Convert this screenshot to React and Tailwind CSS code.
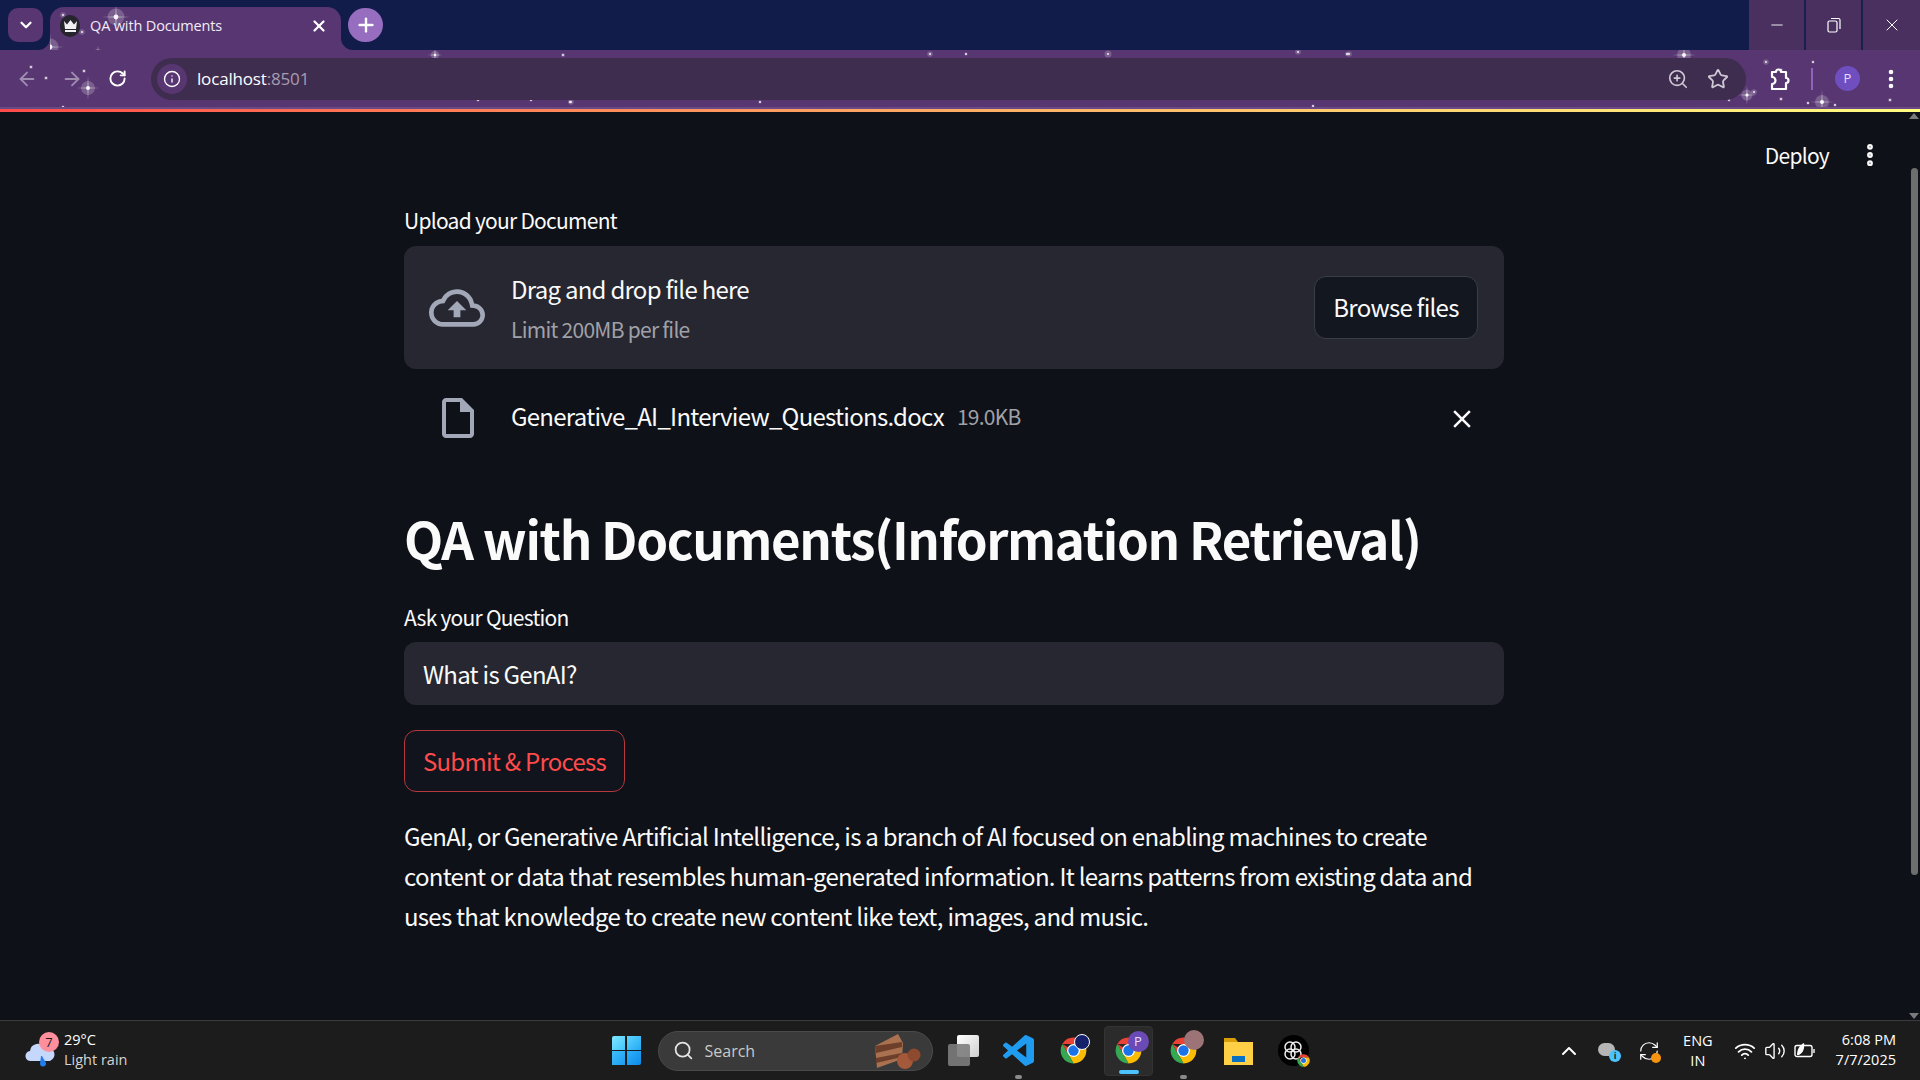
import {
  ArrowLeft, ArrowRight, RotateCw, Info, ZoomIn, Star, EllipsisVertical, X, Plus,
  ChevronDown, ChevronUp, Minus, Search, Wifi, Volume2, RefreshCw,
} from "lucide-react";
import { MdOutlineCloudUpload, MdOutlineInsertDriveFile, MdClose } from "react-icons/md";

const st = '"Noto Sans CJK SC", "Noto Sans", sans-serif';
const sysFont = "font-['Open_Sans','Noto_Sans',sans-serif]";

const tabStars = [
  [66, 10, 6], [0, 40, 6], [48, 46, 3], [11, 50, 2], [32, 25, 2], [13, 8, 2],
];

const barStars = [
  [31, 17, 1.5], [46, 28, 1.5], [84, 21, 1.5], [88, 38, 5], [63, 57, 1.2], [435, 5, 3], [563, 5, 1.5],
  [478, 50, 1.2], [531, 50, 1.2], [571, 52, 2], [930, 4, 2], [966, 4, 1.2], [1108, 4, 2.5], [1347, 4, 1.5],
  [1298, 2, 2], [1349, 4, 2], [1684, 5, 5], [1766, 12, 2], [1813, 12, 1.2], [1781, 20, 1.5],
  [1747, 45, 4], [1754, 42, 2], [1781, 49, 1.5], [1822, 52, 5], [1808, 53, 1.2], [1890, 50, 1.5],
  [1729, 50, 1.2], [1313, 56, 1.2], [570, 52, 1.2], [760, 52, 1.2], [1835, 55, 1.2],
];

// little sparkles of the browser theme
function Sparkles({ stars, className }) {
  return (
    <svg className={className} width="100%" height="100%">
      {stars.map(([x, y, r], i) => (
        <g key={i} fill="#fff">
          <circle cx={x} cy={y} r={r * 1.4} opacity="0.2" />
          <circle cx={x} cy={y} r={Math.max(1, r * 0.4)} opacity="0.9" />
          {r > 2.5 && (
            <>
              <path d={`M${x - r * 2.4} ${y}L${x} ${y - 0.6}L${x + r * 2.4} ${y}L${x} ${y + 0.6}z`} opacity="0.6" />
              <path d={`M${x} ${y - r * 2.4}L${x + 0.6} ${y}L${x} ${y + r * 2.4}L${x - 0.6} ${y}z`} opacity="0.6" />
            </>
          )}
        </g>
      ))}
    </svg>
  );
}

function ChromeLogo({ size = 31 }) {
  return (
    <svg width={size} height={size} viewBox="0 0 48 48">
      <path d="M24 4A20 20 0 0 1 41.32 14L24 14 6.68 14A20 20 0 0 1 24 4z" fill="#ea4335" />
      <path d="M41.32 14A20 20 0 0 1 24 44L15.34 29 24 14z" fill="#fbbc04" />
      <path d="M6.68 14L15.34 29 24 24z" fill="#ea4335" />
      <path d="M6.68 14L15.34 29 24 44A20 20 0 0 1 6.68 14z" fill="#34a853" />
      <circle cx="24" cy="24" r="10" fill="#fff" />
      <circle cx="24" cy="24" r="8" fill="#1a73e8" />
    </svg>
  );
}

function WindowsLogo() {
  return (
    <div className="grid grid-cols-2 gap-[1.5px] w-[29px] h-[29px]">
      <div className="bg-gradient-to-br from-[#7ee8ff] to-[#3fc4fa] rounded-tl-[2px]" />
      <div className="bg-gradient-to-br from-[#5bd4fd] to-[#20a9f5]" />
      <div className="bg-gradient-to-br from-[#3fc0fb] to-[#1a9cf0]" />
      <div className="bg-gradient-to-br from-[#2bb1fa] to-[#0f8ae8] rounded-br-[2px]" />
    </div>
  );
}

function Main() {
  return (
    <main className="flex-1 min-w-0 relative tracking-[-0.046em]" style={{ fontFamily: st }}>
      <div className="absolute right-[24px] top-[29px] flex items-center gap-[27px] text-[#fafafa]">
        <span className="text-[21px] leading-[28px]">Deploy</span>
        <EllipsisVertical size={28} strokeWidth={3} />
      </div>

      <div className="w-[1100px] mx-auto pt-[92px] text-[#fafafa]">
        <p className="text-[21px] leading-[32px]">Upload your Document</p>

        <div className="mt-[10px] h-[123px] bg-[#262730] rounded-[12px] flex items-center pl-[25px] pr-[26px]">
          <MdOutlineCloudUpload size={56} className="text-[#a3a8b8] mr-[26px] shrink-0" />
          <div className="flex-1">
            <p className="text-[24px] leading-[36px] mt-[1px]">Drag and drop file here</p>
            <p className="text-[21px] leading-[32px] mt-[6px] text-[#a0a1a8]">Limit 200MB per file</p>
          </div>
          <button className="w-[164px] h-[63px] -mt-[1px] rounded-[12px] bg-[#13171f] border-[1.5px] border-[#3a3d46] text-[24px]">
            Browse files
          </button>
        </div>

        <div className="h-[64px] mt-[18px] flex items-center">
          <MdOutlineInsertDriveFile size={48} className="text-[#a3a8b8] ml-[30px] mr-[33px] shrink-0 -mt-[2px]" />
          <span className="text-[24px] leading-[36px] -ml-[4px] -mt-[6px]">Generative_AI_Interview_Questions.docx</span>
          <span className="text-[21px] ml-[13px] text-[#a0a1a8] -mt-[5px]">19.0KB</span>
          <MdClose size={30} className="ml-auto mr-[27px]" />
        </div>

        <h1 className="text-[51px] leading-[80px] font-bold tracking-[-0.027em] mt-[47px]">QA with Documents(Information Retrieval)</h1>

        <p className="text-[21px] leading-[32px] mt-[23px]">Ask your Question</p>
        <div className="mt-[9px] h-[63px] bg-[#262730] rounded-[12px] flex items-center px-[19px] text-[24px]">What is GenAI?</div>

        <button className="mt-[25px] h-[62px] w-[221px] rounded-[12px] border-[1.5px] border-[#b5383c] bg-[#11141c] text-[#ff4b4b] text-[24px]">
          Submit &amp; Process
        </button>

        <p className="mt-[24px] text-[24px] leading-[40px]">
          GenAI, or Generative Artificial Intelligence, is a branch of AI focused on enabling machines to create content or data that resembles human-generated information. It learns patterns from existing data and uses that knowledge to create new content like text, images, and music.
        </p>
      </div>
    </main>
  );
}

function Taskbar() {
  return (
    <footer className={`h-[60px] bg-[#1c1c1c] border-t border-[#3b3b3b] grid grid-cols-[1fr_auto_1fr] items-center ${sysFont} text-white`}>
      <div className="flex items-center pl-[25px] gap-[9px]">
        <div className="relative w-[30px] h-[36px]">
          <svg width="30" height="36" viewBox="0 0 30 36" className="absolute inset-0">
            <path d="M6 28a5 5 0 0 1-1-10 8 8 0 0 1 15-3 6 6 0 0 1 5 13z" fill="#c5d8fb" />
            <path d="M16 23l1 0 4 7a3 3 0 0 1-6 1z" fill="#1f7ff0" />
          </svg>
          <span className="absolute -right-[4px] -top-[1px] w-[20px] h-[20px] rounded-full bg-[#ff8f9c] text-[#1c1c1c] text-[13px] leading-[20px] text-center">7</span>
        </div>
        <div className="text-[14.5px] leading-[20px] -mt-[1px]">
          <p>29°C</p>
          <p className="text-[#d4d4d4]">Light rain</p>
        </div>
      </div>

      <div className="flex items-center">
        <WindowsLogo />
        <div className="ml-[17px] w-[275px] h-[40px] rounded-full bg-[#3a3a3a] border border-[#4a4a4a] flex items-center pl-[14px] pr-[11px]">
          <Search size={21} className="text-[#e5e5e5]" />
          <span className="ml-[11px] text-[16px] text-[#c9c9c9]">Search</span>
          <svg width="48" height="38" viewBox="0 0 48 38" className="ml-auto">
            <path d="M2 14L25 2l5 9-1 16-25 9z" fill="#a9714f" />
            <path d="M2 14l27-4v5L3 21zM3 26l26-5v4L3 31z" fill="#6d3f2a" />
            <circle cx="32" cy="29" r="8" fill="#a3593a" />
            <circle cx="41" cy="23" r="6.5" fill="#8d4a2f" />
          </svg>
        </div>
        <div className="relative ml-[15px] w-[31px] h-[31px]">
          <div className="absolute right-0 top-0 w-[22px] h-[22px] rounded-[2px] bg-gradient-to-br from-white to-[#cfcfcf]" />
          <div className="absolute left-0 bottom-0 w-[22px] h-[22px] rounded-[2px] bg-[#7d7d7d]/90" />
        </div>
        <div className="relative ml-[24px] w-[31px] h-[31px]">
          <svg width="31" height="31" viewBox="0 0 24 24">
            <path fill="#1f9cf0" d="M23.15 2.587L18.21.21a1.494 1.494 0 0 0-1.705.29l-9.46 8.63-4.12-3.128a.999.999 0 0 0-1.276.057L.327 7.261A1 1 0 0 0 .326 8.74L3.899 12 .326 15.26a1 1 0 0 0 .001 1.479L1.65 17.94a.999.999 0 0 0 1.276.057l4.12-3.128 9.46 8.63a1.492 1.492 0 0 0 1.704.29l4.942-2.377A1.5 1.5 0 0 0 24 20.06V3.939a1.5 1.5 0 0 0-.85-1.352zm-5.146 14.861L10.826 12l7.178-5.448v10.896z" />
          </svg>
          <span className="absolute left-[12px] top-[40px] w-[7px] h-[4px] rounded-full bg-[#8a8a8a]" />
        </div>
        <div className="relative ml-[24px]">
          <ChromeLogo />
          <span className="absolute -right-[1px] -top-[1px] w-[16px] h-[16px] rounded-full bg-[#14216a] border border-white" />
        </div>
        <div className="relative ml-[15px] w-[49px] h-[50px] rounded-[4px] bg-[#2b2b2b] border border-[#333] flex items-center justify-center">
          <ChromeLogo />
          <span className="absolute right-[3px] top-[4px] w-[21px] h-[21px] rounded-full bg-[#6a4bb5] text-[#e6dcff] text-[13px] leading-[21px] text-center">P</span>
          <span className="absolute left-[14px] bottom-[1px] w-[20px] h-[4px] rounded-full bg-[#4cc2ff]" />
        </div>
        <div className="relative ml-[15px]">
          <ChromeLogo />
          <span className="absolute -right-[5px] -top-[5px] w-[20px] h-[20px] rounded-full bg-[#9c7478]" />
          <span className="absolute left-[12px] top-[40px] w-[7px] h-[4px] rounded-full bg-[#8a8a8a]" />
        </div>
        <svg width="31" height="31" viewBox="0 0 31 31" className="ml-[24px]">
          <path d="M1 3h11l3 4h-14z" fill="#d99f0a" />
          <path d="M1 7h29v23h-29z" fill="#ffcf46" />
          <path d="M9 21h13v6h-13z" fill="#0a70c4" />
        </svg>
        <div className="relative ml-[24px] w-[31px] h-[31px] rounded-full bg-black flex items-center justify-center">
          <svg width="24" height="24" viewBox="0 0 24 24" fill="none" stroke="#eee" strokeWidth="1.5">
            <circle cx="9" cy="8" r="5" />
            <circle cx="15" cy="8" r="5" />
            <circle cx="9" cy="15" r="5" />
            <circle cx="15" cy="15" r="5" />
          </svg>
          <span className="absolute -right-[2px] -bottom-[2px]"><ChromeLogo size={15} /></span>
        </div>
      </div>

      <div className="flex items-center justify-end pr-[24px]">
        <ChevronUp size={24} strokeWidth={2} className="mr-[17px]" />
        <div className="relative w-[20px] h-[16px] mr-[20px]">
          <div className="absolute left-0 top-0 w-[17px] h-[13px] rounded-full bg-[#b5b5b5]" />
          <span className="absolute -right-[3px] -bottom-[3px] w-[12px] h-[12px] rounded-full bg-[#4cc2ff] text-[#1c1c1c] text-[9px] leading-[12px] text-center font-bold">i</span>
        </div>
        <div className="relative mr-[23px]">
          <RefreshCw size={22} strokeWidth={1.3} />
          <span className="absolute -right-[1px] -bottom-[1px] w-[10px] h-[10px] rounded-full bg-[#f7930e]" />
        </div>
        <div className="text-[14.5px] leading-[20px] text-center mr-[21px]">
          <p>ENG</p>
          <p>IN</p>
        </div>
        <Wifi size={22} className="mr-[8px]" />
        <Volume2 size={22} strokeWidth={1.5} className="mr-[8px]" />
        <svg width="22" height="18" viewBox="0 0 22 18" fill="none" stroke="#fff" strokeWidth="1.4" className="mr-[20px]">
          <rect x="1" y="3.5" width="17" height="11" rx="2" />
          <path d="M20 7v4" />
          <path d="M3 13c0-6 3-10 7-12 1 5-1 10-5 12z" fill="#fff" stroke="none" />
        </svg>
        <div className="text-[14.5px] leading-[20px] text-right -mt-[1px]">
          <p>6:08 PM</p>
          <p>7/7/2025</p>
        </div>
      </div>
    </footer>
  );
}

export default function App() {
  return (
    <div className="w-[1920px] h-[1080px] flex flex-col overflow-hidden bg-[#0e1117]">
      {/* browser chrome */}
      <div className={`h-[50px] bg-[#121c4a] flex items-end text-white ${sysFont}`}>
        <div className="w-[35px] h-[34px] ml-[8px] mb-[8px] rounded-[10px] bg-[#583672] flex items-center justify-center">
          <ChevronDown size={18} strokeWidth={3} />
        </div>
        <div className="relative ml-[7px] w-[291px] h-[43px] rounded-t-[14px] bg-[#583672] flex items-center pl-[10px] pr-[13px] pb-[6px]">
          <svg width="12" height="12" viewBox="0 0 12 12" className="absolute -left-[12px] bottom-0">
            <path d="M12 0v12H0a12 12 0 0 0 12-12z" fill="#583672" />
          </svg>
          <svg width="12" height="12" viewBox="0 0 12 12" className="absolute -right-[12px] bottom-0">
            <path d="M0 0v12h12A12 12 0 0 1 0 0z" fill="#583672" />
          </svg>
          <Sparkles stars={tabStars} className="absolute inset-0" />
          <div className="relative w-[20px] h-[22px] rounded-full bg-[#26242c] flex items-center justify-center">
            <svg width="15" height="12" viewBox="0 0 15 12" fill="#f2f2f2">
              <path d="M1 1l3 3.5L7.500 0 11 4.500 14 1l-1 8H2zM2 10h11v2H2z" />
            </svg>
          </div>
          <span className="relative ml-[10px] text-[14.5px] tracking-[-0.01em] text-[#f1ecf6]">QA with Documents</span>
          <X size={18} strokeWidth={3} className="relative ml-auto" />
        </div>
        <div className="w-[35px] h-[34px] ml-[7px] mb-[8px] rounded-full bg-[#966dbf] flex items-center justify-center">
          <Plus size={22} strokeWidth={2.6} />
        </div>
        <div className="ml-auto w-[171px] h-[50px] bg-[#49305f] grid grid-cols-3 divide-x-2 divide-[#172050]">
          <div className="flex items-center justify-center"><Minus size={18} strokeWidth={1.2} /></div>
          <div className="flex items-center justify-center">
            <svg width="14" height="16" viewBox="0 0 14 16" fill="none" stroke="#fff" strokeWidth="1.2">
              <rect x="1" y="4" width="9" height="11" rx="1.5" />
              <path d="M4 1.500h7.500a1.500 1.500 0 0 1 1.500 1.500v9" />
            </svg>
          </div>
          <div className="flex items-center justify-center"><X size={20} strokeWidth={1.2} /></div>
        </div>
      </div>

      <div className="relative h-[59px] bg-[#583672] border-b-2 border-[#6a4a85] flex items-center text-white">
        <Sparkles stars={barStars} className="absolute inset-0" />
        <ArrowLeft size={22} className="relative ml-[16px] text-[#9f8db0]" />
        <ArrowRight size={22} className="relative ml-[23px] text-[#9f8db0]" />
        <RotateCw size={19} strokeWidth={2.4} className="relative ml-[25px]" />
        <div className="relative ml-[24px] w-[1595px] h-[42px] rounded-full bg-[#3f2d50] flex items-center pl-[6px] pr-[17px]">
          <div className="w-[30px] h-[30px] rounded-full bg-[#583672] flex items-center justify-center">
            <Info size={18} strokeWidth={1.8} />
          </div>
          <span className={`ml-[10px] text-[17px] tracking-[-0.01em] ${sysFont}`}>localhost<span className="text-[#a79cb0]">:8501</span></span>
          <ZoomIn size={22} strokeWidth={1.8} className="ml-auto text-[#cfc8d5]" />
          <Star size={22} strokeWidth={2} className="ml-[18px] text-[#cfc8d5]" />
        </div>
        <svg width="24" height="24" viewBox="0 0 24 24" fill="none" stroke="#fff" strokeWidth="2.2" strokeLinejoin="round" className="relative ml-[21px]">
          <path d="M5 5h4a2.500 2.500 0 0 1 5 0h5v6a2.500 2.500 0 0 1 0 5v6H5v-5a3 3 0 0 0 0-7z" />
        </svg>
        <div className="relative ml-[20px] w-[2px] h-[22px] bg-[#9263bd]" />
        <div className={`relative ml-[22px] w-[25px] h-[25px] rounded-full bg-[#6f4fc0] flex items-center justify-center text-[13px] text-[#e6dcff] ${sysFont}`}>P</div>
        <EllipsisVertical size={24} strokeWidth={2.6} className="relative ml-[19px]" />
      </div>

      <div className="h-[3px] bg-gradient-to-r from-[#ff4b4b] to-[#fffd80]" />

      {/* streamlit page */}
      <div className="flex-1 min-h-0 flex">
        <Main />
        <div className="w-[12px] flex flex-col items-center py-[1px]">
          <div className="w-0 h-0 border-x-[5px] border-x-transparent border-b-[6px] border-b-[#7a7a7a]" />
          <div className="w-[7px] h-[707px] mt-[49px] rounded-full bg-[#6e6e6e]" />
          <div className="w-0 h-0 mt-auto border-x-[5px] border-x-transparent border-t-[6px] border-t-[#7a7a7a]" />
        </div>
      </div>

      <Taskbar />
    </div>
  );
}
